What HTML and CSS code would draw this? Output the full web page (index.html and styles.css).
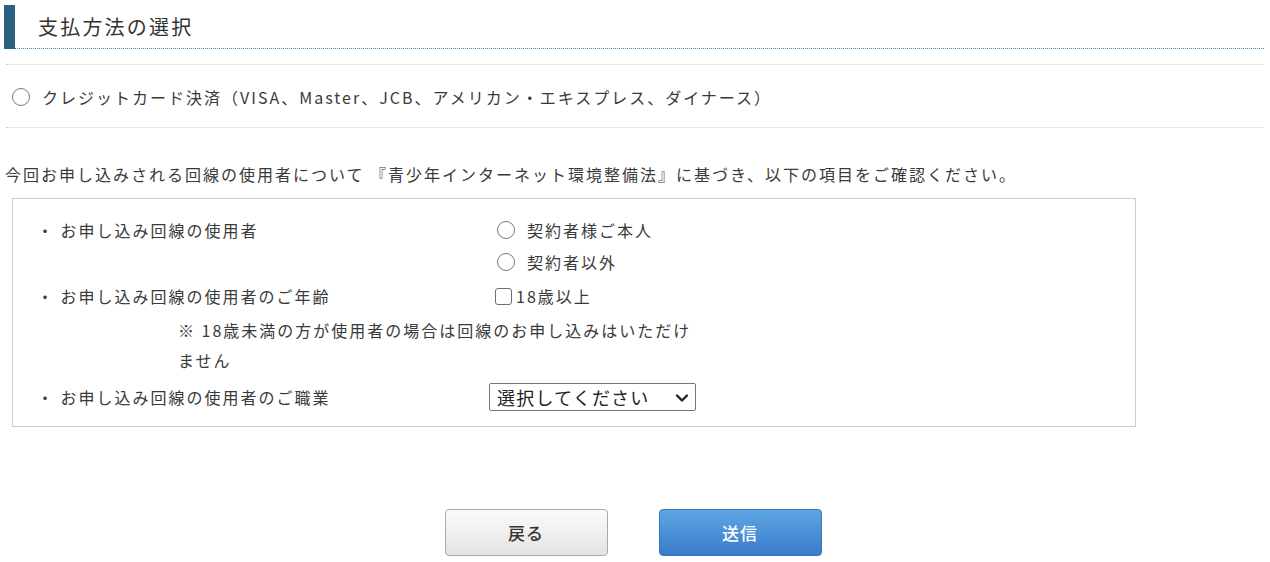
FILE: index.html
```html
<!DOCTYPE html>
<html lang="ja">
<head>
<meta charset="utf-8">
<title>支払方法の選択</title>
<link rel="stylesheet" href="styles.css">
</head>
<body>
<div class="page">
  <div class="heading"><h2>支払方法の選択</h2></div>

  <div class="payment">
    <label class="opt"><span class="radio"></span><span>クレジットカード決済（VISA、Master、JCB、アメリカン・エキスプレス、ダイナース）</span></label>
  </div>

  <p class="lead">今回お申し込みされる回線の使用者について 『青少年インターネット環境整備法』に基づき、以下の項目をご確認ください。</p>

  <div class="box">
    <div class="row r-user">
      <div class="label">・ お申し込み回線の使用者</div>
      <div class="value">
        <label class="opt line"><span class="radio"></span><span>契約者様ご本人</span></label>
        <label class="opt line"><span class="radio"></span><span>契約者以外</span></label>
      </div>
    </div>
    <div class="row r-age">
      <div class="label">・ お申し込み回線の使用者のご年齢</div>
      <div class="value">
        <label class="opt line chk"><span class="check"></span><span>18歳以上</span></label>
      </div>
    </div>
    <p class="note">※ 18歳未満の方が使用者の場合は回線のお申し込みはいただけません</p>
    <div class="row r-job">
      <div class="label">・ お申し込み回線の使用者のご職業</div>
      <div class="value">
        <span class="select-wrap">
          <select class="select"><option>選択してください</option></select>
          <svg class="chev" width="14" height="10" viewBox="0 0 14 10"><path d="M2 2.5 L7 7.5 L12 2.5" fill="none" stroke="#222" stroke-width="2.4" stroke-linecap="round" stroke-linejoin="round"/></svg>
        </span>
      </div>
    </div>
  </div>

  <div class="actions">
    <button class="btn btn-back">戻る</button>
    <button class="btn btn-send">送信</button>
  </div>
</div>
</body>
</html>
```

FILE: styles.css
```css
* { box-sizing: border-box; }
html, body { margin: 0; padding: 0; background: #fff; }
body {
  font-family: "Noto Sans CJK JP", "Noto Sans", sans-serif;
  color: #3a3a3a;
  font-size: 16px;
  letter-spacing: 2px;
}
.page { width: 1270px; padding-top: 5px; }

.heading {
  margin: 0 6px 0 4px;
  border-left: 11px solid #2d5f80;
}
.heading h2 {
  margin: 0;
  height: 44px;
  line-height: 43px;
  padding-left: 23px;
  font-size: 20px;
  font-weight: 400;
  letter-spacing: 2.2px;
  color: #333;
  border-bottom: 1px dotted #3f84ad;
}

.payment {
  margin: 15px 6px 0 6px;
  border-top: 1px dotted #cfcfcf;
  border-bottom: 1px dotted #cfcfcf;
  height: 64px;
  display: flex;
  align-items: center;
  padding-left: 6px;
  padding-top: 2px;
}

.opt { display: flex; align-items: center; }
.radio {
  width: 18px; height: 18px;
  border: 1.5px solid #7a7a7a;
  border-radius: 50%;
  margin-right: 12px;
  flex: none;
}
.check {
  width: 17px; height: 17px;
  border: 1.5px solid #6f6f6f;
  border-radius: 3px;
  margin-right: 4px;
  flex: none;
}

.lead {
  margin: 33px 0 0 5px;
  line-height: 26px;
}

.box {
  margin: 11px 0 0 12px;
  width: 1124px;
  border: 1px solid #cdcdcd;
  padding: 15px 0 12px 24px;
}
.row { display: flex; }
.label { width: 452px; line-height: 32px; }
.value { display: flex; flex-direction: column; }
.line { height: 32px; padding-left: 8px; }
.line.chk { padding-left: 6px; }
.r-age { margin-top: 2px; }
.note {
  margin: 3px 0 0 141px;
  width: 518px;
  line-height: 30px;
}
.r-job { margin-top: 5px; align-items: center; }
.r-job .label { line-height: 34px; }

.select-wrap { position: relative; display: inline-block; }
.select {
  appearance: none;
  -webkit-appearance: none;
  width: 207px; height: 28px;
  border: 1px solid #767676;
  border-radius: 2px;
  background: #fff;
  font-family: "Noto Sans CJK JP", sans-serif;
  font-size: 18px;
  letter-spacing: 1.2px;
  color: #222;
  padding: 0 0 0 7px;
  line-height: 26px;
}
.chev { position: absolute; right: 7px; top: 10px; }

.actions {
  display: flex;
  justify-content: center;
  gap: 51px;
  margin-top: 82px;
  padding-right: 4px;
}
.btn {
  width: 163px; height: 47px;
  border-radius: 4px;
  font-family: "Noto Sans CJK JP", sans-serif;
  font-size: 17px;
  font-weight: 500;
  letter-spacing: 1px;
}
.btn-back {
  background: linear-gradient(#fbfbfb, #e3e3e3);
  border: 1px solid #a9a9a9;
  color: #333;
}
.btn-send {
  background: linear-gradient(#5ea6e3, #3a7bcb);
  border: 1px solid #3b74b8;
  color: #fff;
}
```
